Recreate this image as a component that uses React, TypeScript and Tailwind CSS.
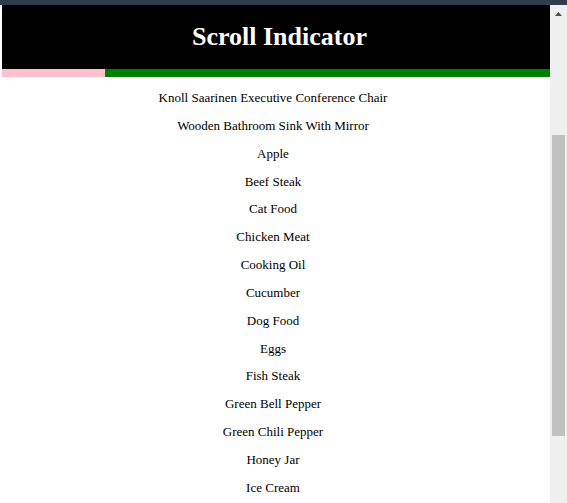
const items = [
  'Knoll Saarinen Executive Conference Chair',
  'Wooden Bathroom Sink With Mirror',
  'Apple',
  'Beef Steak',
  'Cat Food',
  'Chicken Meat',
  'Cooking Oil',
  'Cucumber',
  'Dog Food',
  'Eggs',
  'Fish Steak',
  'Green Bell Pepper',
  'Green Chili Pepper',
  'Honey Jar',
  'Ice Cream',
]

function Scrollbar() {
  return (
    <div className="flex w-[17px] shrink-0 flex-col items-center bg-[#f0f0f0]">
      <div className="flex h-[17px] w-full items-center justify-center">
        <svg width="7" height="4" viewBox="0 0 7 4" className="mt-[1px]">
          <path d="M3.5 0 L7 4 L0 4 Z" fill="#505050" />
        </svg>
      </div>
      <div className="h-[113px] shrink-0" />
      <div className="h-[301px] w-[13px] shrink-0 bg-[#c1c1c1]" />
    </div>
  )
}

export default function App() {
  const progress = 103

  return (
    <div className="flex h-screen flex-col overflow-hidden bg-white font-['Liberation_Serif',serif] text-black">
      <div className="h-[5px] shrink-0 bg-[#2f3e4b]" />
      <div className="flex min-h-0 flex-1">
        <main className="flex min-w-0 flex-1 flex-col overflow-hidden">
          <header className="ml-[2px] flex h-16 shrink-0 items-center justify-center bg-black pl-[7px]">
            <h1 className="text-[26px] font-bold leading-none text-white">Scroll Indicator</h1>
          </header>
          <div className="ml-[2px] flex h-2 shrink-0 bg-[#008000]">
            <div className="h-full bg-[#ffc0cb]" style={{ width: progress }} />
          </div>
          <ul className="pr-[4px] pt-[7px] text-center text-[13px]">
            {items.map((item) => (
              <li key={item} className="h-[27.85px] leading-[27.85px]">
                {item}
              </li>
            ))}
          </ul>
        </main>
        <Scrollbar />
      </div>
    </div>
  )
}
